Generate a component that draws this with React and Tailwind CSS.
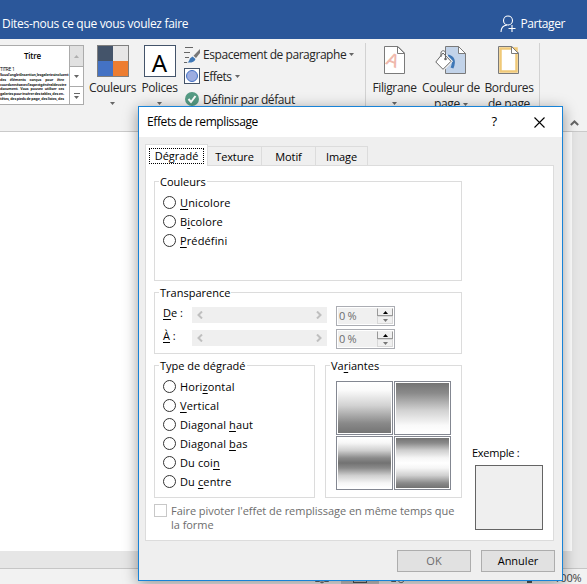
import React from "react";

const Caret = ({ className = "" }) => (
  <svg className={`shrink-0 ${className}`} width="5" height="3" viewBox="0 0 5 3">
    <path d="M0 0h5L2.5 3z" fill="#666" />
  </svg>
);

const PageShape = ({ fill = "#fff", children }) => (
  <svg width="32" height="30" viewBox="0 0 32 30" className="shrink-0 overflow-visible">
    <path d="M5.500 1.500h13.500l6.500 6.500v20.500h-20z" fill={fill} stroke="#7a7a7a" />
    {children}
    <path d="M18.500 1.500v7h7z" fill="#fff" stroke="#7a7a7a" />
  </svg>
);

function TitleBar() {
  return (
    <header className="flex h-[39px] shrink-0 items-center justify-between bg-[#2b579a] pl-[2px] pr-[22px] pt-[9px] text-[12px] text-white">
      <span className="tracking-[-0.31px]">Dites-nous ce que vous voulez faire</span>
      <span className="flex items-center gap-[4px]">
        <svg width="16" height="18" viewBox="0 0 16 18" fill="none" stroke="#fff" strokeWidth="1.100">
          <circle cx="8" cy="5.500" r="4.500" />
          <path d="M1 17c0-4 2.500-6.500 6-7M8.500 13.500h7M12 10v7" />
        </svg>
        <span className="tracking-[-0.42px]">Partager</span>
      </span>
    </header>
  );
}

const sampleLines = [
  "Sous l'onglet Insertion, les galeries incluent",
  "des éléments conçus pour être",
  "coordonnés avec l'aspect général de votre",
  "document. Vous pouvez utiliser ces",
  "galeries pour insérer des tables, des en-",
  "têtes, des pieds de page, des listes, des",
];

function StyleGallery() {
  return (
    <div className="flex h-[60px] w-[84px] shrink-0 border-y border-r border-[#ababab] bg-white">
      <div className="w-[69px] pr-[5px] text-black">
        <div className="pl-[24px] pt-[4px] text-[8px] font-semibold leading-[12px] tracking-[-0.2px]">Titre</div>
        <div className="mt-[4px] h-[6px] text-[5px] leading-[6px]">TITRE 1</div>
        <div className="mt-[1px] font-['Noto_Sans','Open_Sans',sans-serif] text-[3.700px] font-bold leading-[4.800px] tracking-[-0.17px] text-[#222]">
          {sampleLines.map((line) => (
            <div key={line} className="flex justify-between whitespace-nowrap">
              {line.split(" ").map((word, i) => <span key={i}>{word}</span>)}
            </div>
          ))}
        </div>
      </div>
      <div className="flex w-[14px] flex-col border-l border-[#ababab]">
        <div className="flex h-[20px] items-center justify-center bg-[#e1e1e1]"><Caret className="rotate-180 opacity-40" /></div>
        <div className="flex h-[20px] items-center justify-center border-t border-[#ababab]"><Caret /></div>
        <div className="flex flex-1 flex-col items-center justify-center gap-[2px] border-t border-[#ababab]">
          <div className="h-px w-[6px] bg-[#666]" />
          <Caret />
        </div>
      </div>
    </div>
  );
}

function Ribbon() {
  return (
    <section className="flex h-[93px] shrink-0 items-start border-b border-[#cacaca] bg-[#f2f2f2] pt-[4px] text-[12px] leading-[16px] tracking-[-0.36px] text-[#262626]">
      <div className="flex shrink-0 pt-[2px]">
        <StyleGallery />
        <div className="ml-[4px] flex w-[49px] flex-col items-center whitespace-nowrap">
          <div className="ml-px grid h-[32px] w-[32px] grid-cols-2 border border-[#7f7f7f]">
            <i className="bg-[#44546a]" /><i className="bg-[#e7e6e6]" /><i className="bg-[#4472c4]" /><i className="bg-[#ed7d31]" />
          </div>
          <span className="mt-[3px]">Couleurs</span>
          <Caret className="mt-[6px]" />
        </div>
        <div className="ml-[3px] flex w-[39px] flex-col items-center whitespace-nowrap">
          <div className="flex h-[32px] w-[32px] items-center justify-center border border-[#44546a] bg-white pt-[3px] font-['Noto_Sans','Open_Sans',sans-serif] text-[24px] leading-none tracking-normal text-black">A</div>
          <span className="mt-[3px]">Polices</span>
          <Caret className="mt-[6px]" />
        </div>
        <div className="ml-[5px] flex w-[170px] flex-col whitespace-nowrap">
          <div className="flex h-[19px] items-center">
            <svg width="16" height="18" viewBox="0 0 16 18" className="mr-[3px] shrink-0">
              <path d="M1 1.500h8M0 6.500h6M1 11.500h4M0 16.500h3" stroke="#666" />
              <path d="M16 3v4l-4 5-2.500-2.200z" fill="#777" />
              <path d="M8.500 10.500l3 2.500c-1 3-4 4-8.500 3.500 2-.5 2-2 3-4z" fill="#3e77b6" />
            </svg>
            <span className="w-[143px] shrink-0 tracking-[-0.44px]">Espacement de paragraphe</span><Caret className="ml-[3px]" />
          </div>
          <div className="mt-[4px] flex h-[16px] items-center">
            <span className="mr-[3px] flex h-[16px] w-[16px] items-center justify-center border border-[#44546a] bg-white"><i className="h-[12px] w-[12px] rounded-full border border-[#4472c4] bg-[#9dade0]" /></span>
            <span className="pt-px tracking-[-0.5px]">Effets</span><Caret className="ml-[4px]" />
          </div>
          <div className="mt-[7px] flex h-[16px] items-center">
            <svg width="16" height="16" viewBox="0 0 16 16" className="mr-[3px] shrink-0"><circle cx="8" cy="8" r="7" fill="#569c85" /><path d="M4.500 8l2.500 3 4.500-6" fill="none" stroke="#fff" strokeWidth="2" /></svg>
            <span className="pt-[2px] tracking-[-0.42px]">Définir par défaut</span>
          </div>
        </div>
      </div>
      <div className="ml-[11px] h-[84px] w-px shrink-0 bg-[#d2d2d2]" />
      <div className="flex w-[173px] shrink-0 whitespace-nowrap pt-[2px] text-center">
        <div className="ml-[6px] flex w-[45px] flex-col items-center">
          <PageShape><text x="8" y="22" transform="rotate(22 15 15)" fontSize="18" fontWeight="600" fill="#efb9ad">A</text></PageShape>
          <span className="mt-[5px]">Filigrane</span>
          <Caret className="mt-[6px]" />
        </div>
        <div className="ml-[5px] flex w-[58px] flex-col items-center">
          <svg width="32" height="30" viewBox="0 0 32 30">
            <path d="M10.500 1.500h13l7 7v20h-20z" fill="#c2d3e9" stroke="#7a7a7a" />
            <path d="M23.500 1.500v7h7z" fill="#fff" stroke="#7a7a7a" />
            <path d="M13 11c5 1 7 5 4 12" fill="none" stroke="#3e77b6" strokeWidth="3" />
            <path d="M8 8L.8 17 8 24.300l8-8z" fill="#fff" stroke="#f2f2f2" strokeWidth="3" />
            <path d="M8 8L.8 17 8 24.300l8-8zM6 12V8c0-3 4.500-3 4.500 0v5" fill="#fff" stroke="#666" />
            <circle cx="10.500" cy="14" r="1.300" fill="#666" />
          </svg>
          <span className="mt-[5px]">Couleur de</span>
          <span className="flex items-center gap-[3px]">page<Caret /></span>
        </div>
        <div className="ml-[5px] flex w-[48px] flex-col items-center">
          <PageShape><path d="M7.500 3.500h16v23h-16z" fill="none" stroke="#f0c978" strokeWidth="2.500" /></PageShape>
          <span className="mt-[5px]">Bordures</span>
          <span>de page</span>
        </div>
      </div>
      <div className="h-[84px] w-px shrink-0 bg-[#d2d2d2]" />
      <svg className="ml-[30px] mt-[77px] shrink-0" width="9" height="6" viewBox="0 0 9 6"><path d="M.8 5l3.700-3.500L8.200 5" fill="none" stroke="#666" strokeWidth="2" /></svg>
    </section>
  );
}

function StatusBar() {
  return (
    <footer className="flex h-[16px] shrink-0 items-start border-t border-[#c6c6c6] bg-[#f2f2f2] text-[11px] leading-[18px] text-[#444]">
      <svg className="ml-[315px] mt-[4px] shrink-0" width="14" height="11" viewBox="0 0 14 11"><path d="M.5 0v8.500h4l2.500 1.500 2.500-1.500h4V0M7 0v10M3 6h2M9 6h2" fill="none" stroke="#666" /></svg>
      <div className="ml-[12px] flex h-full w-[38px] shrink-0 justify-center bg-[#c6c6c6]"><i className="mt-[4px] h-[10px] w-[14px] border border-[#555]" /></div>
      <svg className="ml-[12px] mt-[3px] shrink-0" width="14" height="12" viewBox="0 0 14 12"><path d="M.5 0v9.500H5M8 6c-2 3 1 6 4 4 2-2 1-5-2-5" fill="none" stroke="#666" /></svg>
      <i className="ml-[122px] mt-[3px] h-[11px] w-[5px] shrink-0 bg-[#555]" />
      <span className="ml-[22px] shrink-0 tracking-[-0.1px]">100%</span>
    </footer>
  );
}

// Text with a keyboard mnemonic: the letter after "&" is underlined.
function Mnemonic({ text }) {
  const i = text.indexOf("&");
  if (i < 0) return text;
  return <>{text.slice(0, i)}<span className="underline underline-offset-2">{text[i + 1]}</span>{text.slice(i + 2)}</>;
}

function Group({ title, className = "", children }) {
  return (
    <section className={`flex flex-col border border-[#dcdcdc] ${className}`}>
      <h3 className="-mt-[8px] ml-[4px] h-[15px] shrink-0 self-start whitespace-nowrap bg-white px-px leading-[15px]"><Mnemonic text={title} /></h3>
      {children}
    </section>
  );
}

const Radio = ({ text }) => (
  <label className="flex h-[19px] items-center gap-[4px] whitespace-nowrap">
    <i className="h-[13px] w-[13px] shrink-0 rounded-full border border-[#333] bg-white" />
    <span className="pt-px tracking-[0.12px]"><Mnemonic text={text} /></span>
  </label>
);

const Chevron = ({ className = "" }) => (
  <svg className={className} width="6" height="8" viewBox="0 0 6 8"><path d="M5 .5L1.500 4 5 7.500" fill="none" stroke="#bfbfbf" strokeWidth="2" /></svg>
);

function SpinHalf({ up }) {
  return (
    <div className={`flex h-[8px] items-center justify-center border ${up ? "border-[#999] border-t-[#f0f0f0]" : "border-[#d8d8d8]"} bg-[#f0f0f0]`}>
      <svg width="5" height="3" viewBox="0 0 5 3"><path d={up ? "M0 3h5L2.500 0z" : "M0 0h5L2.500 3z"} fill={up ? "#000" : "#777"} /></svg>
    </div>
  );
}

function Slider({ label, className = "" }) {
  return (
    <div className={`flex items-start ${className}`}>
      <span className="w-[29px] leading-[13px]"><Mnemonic text={label} /></span>
      <div className="mt-px flex h-[16px] w-[135px] items-center justify-between bg-[#efefef] px-[5px]"><Chevron /><Chevron className="rotate-180" /></div>
      <div className="ml-[9px] flex h-[20px] w-[59px] border border-[#abadb3] bg-white p-px">
        <div className="flex-1 bg-[#f0f0f0] pl-px leading-[16px] tracking-[-0.3px] text-[#6d6d6d]">0 %</div>
        <div className="flex w-[16px] flex-col bg-white"><SpinHalf up /><SpinHalf /></div>
      </div>
    </div>
  );
}

const tabs = ["Texture", "Motif", "Image"];
const shades = [
  "bg-[linear-gradient(#fff,#fafafa_15%,#d2d2d2_45%,#8a8a8a_80%,#747474)]",
  "bg-[linear-gradient(#747474,#8a8a8a_20%,#d2d2d2_55%,#fafafa_85%,#fff)]",
  "bg-[linear-gradient(#fff,#f6f6f6_10%,#cfcfcf_25%,#8a8a8a_40%,#727272_50%,#8a8a8a_60%,#cfcfcf_75%,#f6f6f6_90%,#fff)]",
  "bg-[linear-gradient(#727272,#8a8a8a_10%,#cfcfcf_25%,#f6f6f6_40%,#fff_50%,#f6f6f6_60%,#cfcfcf_75%,#8a8a8a_90%,#727272)]",
];

function Dialog() {
  return (
    <div className="absolute left-[138px] top-[106px] flex h-[475px] w-[425px] flex-col border border-[#1883d7] bg-[#efefef] text-[11px] text-black shadow-[0_3px_14px_rgba(0,0,0,0.4)]">
      <div className="flex h-[30px] shrink-0 items-center bg-white pl-[8px] text-[12px]">
        <span className="flex-1 tracking-[-0.4px]">Effets de remplissage</span>
        <span className="mr-[37px] text-[13px] font-medium">?</span>
        <svg className="mr-[17px]" width="11" height="11" viewBox="0 0 11 11"><path d="M.5.500l10 10M10.500.500l-10 10" stroke="#000" strokeWidth="1.100" /></svg>
      </div>
      <div className="mt-[7px] flex h-[21px] shrink-0 items-end pl-[6px]">
        <div className="z-10 -mb-px flex h-[22px] w-[63px] border border-b-0 border-[#dcdcdc] bg-white px-[3px] pb-px pt-[3px]">
          <span className="h-[16px] w-full border border-dotted border-black text-center leading-[14px]">Dégradé</span>
        </div>
        {tabs.map((t) => (
          <div key={t} className={`h-[19px] border border-b-0 border-l-0 border-[#dcdcdc] text-center leading-[20px] tracking-[-0.1px] ${t === "Image" ? "w-[52px]" : "w-[54px]"}`}>{t}</div>
        ))}
      </div>
      <main className="ml-[6px] flex h-[376px] w-[409px] shrink-0 border border-[#dcdcdc] bg-white pl-[8px] pt-[15px]">
        <div className="w-[308px]">
          <Group title="Couleurs" className="h-[100px]">
            <div className="pl-[8px] pt-[4px]">
              <Radio text="&Unicolore" /><Radio text="B&icolore" /><Radio text="&Prédéfini" />
            </div>
          </Group>
          <Group title="Transparence" className="mt-[11px] h-[62px]">
            <div className="pl-[8px] pt-[6px]">
              <Slider label="&De :" /><Slider label="&À :" className="mt-[3px]" />
            </div>
          </Group>
          <div className="mt-[11px] flex justify-between">
            <Group title="Type de dégradé" className="h-[133px] w-[161px]">
              <div className="pl-[8px] pt-[4px]">
                <Radio text="Hori&zontal" /><Radio text="&Vertical" /><Radio text="Diagonal &haut" /><Radio text="Diagonal &bas" /><Radio text="Du coi&n" /><Radio text="Du &centre" />
              </div>
            </Group>
            <Group title="Va&riantes" className="h-[133px] w-[137px]">
              <div className="ml-[10px] mt-[8px] grid w-[115px] grid-cols-2 gap-px">
                {shades.map((s) => (
                  <div key={s} className="h-[54px] border border-[#838791] bg-white p-px"><div className={`h-full ${s}`} /></div>
                ))}
              </div>
            </Group>
          </div>
          <div className="mt-[6px] flex gap-[4px] text-[#6d6d6d]">
            <i className="h-[13px] w-[13px] shrink-0 border border-[#c8c8c8]" />
            <span className="whitespace-nowrap leading-[13.500px] tracking-[-0.04px]">Faire pivoter l'effet de remplissage en même temps que<br />la forme</span>
          </div>
        </div>
        <div className="ml-[10px] mt-[265px]">
          <div className="h-[15px] leading-[14px] tracking-[-0.25px]">Exemple :</div>
          <div className="ml-[3px] mt-[4px] h-[65px] w-[68px] border border-[#646464] bg-[#efefef]" />
        </div>
      </main>
      <div className="mt-[9px] flex justify-end gap-[10px] pr-[7px] text-center leading-[20px]">
        <div className="h-[22px] w-[74px] border border-[#adadad] bg-[#e1e1e1] text-[#6d6d6d]">OK</div>
        <div className="h-[22px] w-[74px] border border-[#adadad] bg-[#e1e1e1]">Annuler</div>
      </div>
    </div>
  );
}

export default function App() {
  return (
    <div className="relative flex h-[584px] w-[587px] flex-col overflow-hidden bg-[#e6e6e6] font-['Open_Sans','Noto_Sans',sans-serif]">
      <TitleBar />
      <Ribbon />
      <div className="flex-1 pb-[17px] pr-[15px]"><div className="h-full bg-white" /></div>
      <StatusBar />
      <Dialog />
    </div>
  );
}
